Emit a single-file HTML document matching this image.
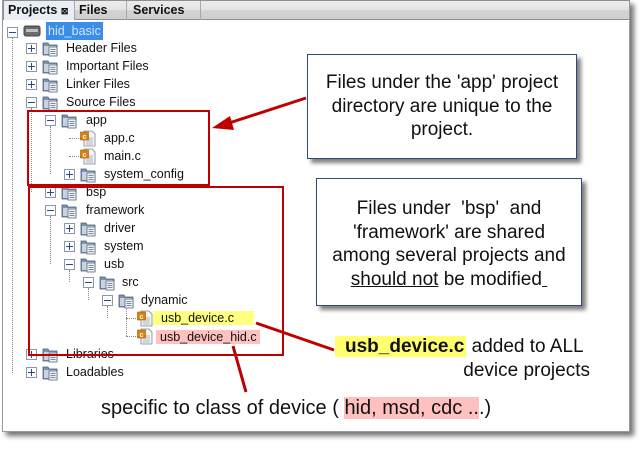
<!DOCTYPE html>
<html><head><meta charset="utf-8"><style>
*{margin:0;padding:0;box-sizing:border-box}
body{width:644px;height:449px;background:#fff;position:relative;overflow:hidden;font-family:"Liberation Sans",Arial,sans-serif}
#frame{position:absolute;left:2px;top:0;width:628px;height:432px;border-left:1px solid #9a9aa2;border-right:1px solid #9a9aa2;border-bottom:1px solid #9a9aa2;background:#fff;box-shadow:4px 4px 5px rgba(0,0,0,.55)}
#tabs{position:absolute;left:0;top:0;width:626px;height:20px;background:linear-gradient(#ececec,#e4e4e4 50%,#d4d4d4 50%,#cfcfcf);border-top:1px solid #8e8e98;border-bottom:1px solid #8e8e98}
.tab{position:absolute;top:0;height:19px;font-size:12.5px;font-weight:bold;line-height:19px;padding-left:4px;border-right:1px solid #a8a8b0;color:#111}
.row{position:absolute;font-size:12.5px;height:18px;line-height:18px;color:#111;white-space:nowrap}
.exp{position:absolute;width:11px;height:11px;border:1px solid #8a98a8;background:#fff}
.exp::before{content:"";position:absolute;left:1px;top:4px;width:7px;height:1px;background:#2a4a8a}
.exp.p::after{content:"";position:absolute;left:4px;top:1px;width:1px;height:7px;background:#2a4a8a}
.vd{position:absolute;border-left:1px dotted #888;width:0}
.hd{position:absolute;border-top:1px dotted #888;height:0}
.ic{position:absolute}
.rb{position:absolute;border:2px solid #c00000}
.call{position:absolute;border:1px solid #2e4a7a;background:#fff;box-shadow:4px 4px 4px rgba(0,0,0,.5);text-align:center;font-size:19px;line-height:23.5px;color:#111;white-space:nowrap}
</style></head><body>
<div id="frame">
<div id="tabs">
<div class="tab" style="left:0;width:72px;background:#e9eef5;border-left:1px solid #8e8e98">Projects <span style="font-size:9px">⊠</span></div>
<div class="tab" style="left:72px;width:52px">Files</div>
<div class="tab" style="left:124px;width:74px;padding-left:6px">Services</div>
</div>
</div>

<svg width="0" height="0" style="position:absolute">
<defs>
<g id="fold"><path d="M1 3h5l1 2h8v10H1z" fill="#7d93ad" stroke="#4a5e78" stroke-width=".8"/><path d="M2 6h12v8H2z" fill="#c7d3e0"/><rect x="7" y="7" width="8" height="9" fill="#eef2f6" stroke="#5a6a80" stroke-width=".8"/><path d="M8.5 9.5h5M8.5 11.5h5M8.5 13.5h5" stroke="#5a6a80" stroke-width=".8"/></g>
<g id="cfile"><path d="M4 1h8l3 3v12H4z" fill="#f4f4f4" stroke="#7a8694" stroke-width=".8"/><path d="M6 8h7M6 10h7M6 12h7M6 14h7" stroke="#9aa4b0" stroke-width=".7"/><rect x="0.5" y="2" width="8" height="8" fill="#d9820e" stroke="#a05a00" stroke-width=".6"/><text x="4.5" y="9" font-size="7" font-weight="bold" fill="#fff" text-anchor="middle" font-family="Liberation Sans">c</text></g>
</defs></svg>

<div class="vd" style="left:12px;top:38px;height:335px"></div>
<div class="vd" style="left:31px;top:108px;height:84px"></div>
<div class="vd" style="left:50px;top:126px;height:48px"></div>
<div class="vd" style="left:50px;top:216px;height:48px"></div>
<div class="vd" style="left:69px;top:270px;height:12px"></div>
<div class="vd" style="left:88px;top:288px;height:12px"></div>
<div class="vd" style="left:107px;top:306px;height:12px"></div>
<div class="vd" style="left:126px;top:306px;height:30px"></div>
<div class="hd" style="left:69px;top:138px;width:12px"></div>
<div class="hd" style="left:69px;top:156px;width:12px"></div>
<div class="hd" style="left:126px;top:318px;width:12px"></div>
<div class="hd" style="left:126px;top:336px;width:12px"></div>

<div class="exp" style="left:7px;top:27px"></div>
<svg class="ic" style="left:23px;top:23px" width="18" height="16"><rect x="1" y="3" width="16" height="10" rx="2" fill="#6a6a6a" stroke="#444"/><rect x="3" y="6" width="12" height="3" fill="#c0c0c0"/></svg>
<div class="row" style="left:46px;top:22px;background:#3b8ee8;color:#cfe4ff;padding:0 2px">hid_basic</div>

<div class="exp p" style="left:26px;top:43px"></div><svg class="ic" style="left:42px;top:40px" width="17" height="17"><use href="#fold"/></svg><div class="row" style="left:66px;top:39px">Header Files</div>
<div class="exp p" style="left:26px;top:61px"></div><svg class="ic" style="left:42px;top:58px" width="17" height="17"><use href="#fold"/></svg><div class="row" style="left:66px;top:57px">Important Files</div>
<div class="exp p" style="left:26px;top:79px"></div><svg class="ic" style="left:42px;top:76px" width="17" height="17"><use href="#fold"/></svg><div class="row" style="left:66px;top:75px">Linker Files</div>
<div class="exp" style="left:26px;top:97px"></div><svg class="ic" style="left:42px;top:94px" width="17" height="17"><use href="#fold"/></svg><div class="row" style="left:66px;top:93px">Source Files</div>

<div class="exp" style="left:45px;top:115px"></div><svg class="ic" style="left:61px;top:112px" width="17" height="17"><use href="#fold"/></svg><div class="row" style="left:86px;top:111px">app</div>
<svg class="ic" style="left:80px;top:130px" width="17" height="17"><use href="#cfile"/></svg><div class="row" style="left:104px;top:129px">app.c</div>
<svg class="ic" style="left:80px;top:148px" width="17" height="17"><use href="#cfile"/></svg><div class="row" style="left:104px;top:147px">main.c</div>
<div class="exp p" style="left:64px;top:169px"></div><svg class="ic" style="left:80px;top:166px" width="17" height="17"><use href="#fold"/></svg><div class="row" style="left:104px;top:165px">system_config</div>

<div class="exp p" style="left:45px;top:187px"></div><svg class="ic" style="left:61px;top:184px" width="17" height="17"><use href="#fold"/></svg><div class="row" style="left:86px;top:183px">bsp</div>
<div class="exp" style="left:45px;top:205px"></div><svg class="ic" style="left:61px;top:202px" width="17" height="17"><use href="#fold"/></svg><div class="row" style="left:86px;top:201px">framework</div>
<div class="exp p" style="left:64px;top:223px"></div><svg class="ic" style="left:80px;top:220px" width="17" height="17"><use href="#fold"/></svg><div class="row" style="left:104px;top:219px">driver</div>
<div class="exp p" style="left:64px;top:241px"></div><svg class="ic" style="left:80px;top:238px" width="17" height="17"><use href="#fold"/></svg><div class="row" style="left:104px;top:237px">system</div>
<div class="exp" style="left:64px;top:259px"></div><svg class="ic" style="left:80px;top:256px" width="17" height="17"><use href="#fold"/></svg><div class="row" style="left:104px;top:255px">usb</div>
<div class="exp" style="left:83px;top:277px"></div><svg class="ic" style="left:99px;top:274px" width="17" height="17"><use href="#fold"/></svg><div class="row" style="left:122px;top:273px">src</div>
<div class="exp" style="left:102px;top:295px"></div><svg class="ic" style="left:118px;top:292px" width="17" height="17"><use href="#fold"/></svg><div class="row" style="left:141px;top:291px">dynamic</div>
<svg class="ic" style="left:137px;top:310px" width="17" height="17"><use href="#cfile"/></svg><div class="row" style="left:153px;top:311px;height:14px;line-height:14px;width:101px;background:#ffff80;padding-left:8px">usb_device.c</div>
<svg class="ic" style="left:137px;top:328px" width="17" height="17"><use href="#cfile"/></svg><div class="row" style="left:156px;top:330px;height:14px;line-height:14px;width:104px;background:#ffc0c0;padding-left:4px">usb_device_hid.c</div>

<div class="exp p" style="left:26px;top:349px"></div><svg class="ic" style="left:42px;top:346px" width="17" height="17"><use href="#fold"/></svg><div class="row" style="left:66px;top:345px">Libraries</div>
<div class="exp p" style="left:26px;top:367px"></div><svg class="ic" style="left:42px;top:364px" width="17" height="17"><use href="#fold"/></svg><div class="row" style="left:66px;top:363px">Loadables</div>

<div class="rb" style="left:27px;top:110px;width:183px;height:76px"></div>
<div class="rb" style="left:28px;top:186px;width:256px;height:170px"></div>

<svg style="position:absolute;left:0;top:0" width="644" height="449">
<line x1="306" y1="98" x2="226" y2="124" stroke="#c00000" stroke-width="3"/>
<polygon points="212,128 230,116 234,130" fill="#c00000"/>
<line x1="256" y1="323" x2="334" y2="350" stroke="#c00000" stroke-width="3"/>
<line x1="233" y1="346" x2="246" y2="392" stroke="#c00000" stroke-width="3"/>
</svg>

<div class="call" style="left:307px;top:54px;width:270px;height:105px;padding-top:16px">Files under the 'app' project<br>directory are unique to the<br>project.</div>
<div class="call" style="left:316px;top:178px;width:266px;height:128px;padding-top:18px">Files under &nbsp;'bsp' &nbsp;and<br>'framework' are shared<br>among several projects and<br><u>should not</u> be modified<u>&nbsp;</u></div>

<div style="position:absolute;left:335px;top:335px;font-size:19px;line-height:23px;color:#111;white-space:nowrap"><span style="background:#ffff70;font-weight:bold;padding:0 2px 0 10px">usb_device.c</span> added to ALL</div>
<div style="position:absolute;left:440px;top:359px;width:150px;text-align:right;font-size:19px;line-height:23px;color:#111">device projects</div>
<div style="position:absolute;left:101px;top:396px;font-size:20px;line-height:24px;color:#111;white-space:nowrap">specific to class of device ( <span style="background:#ffc0c0">hid, msd, cdc ..</span>.)</div>
</body></html>
